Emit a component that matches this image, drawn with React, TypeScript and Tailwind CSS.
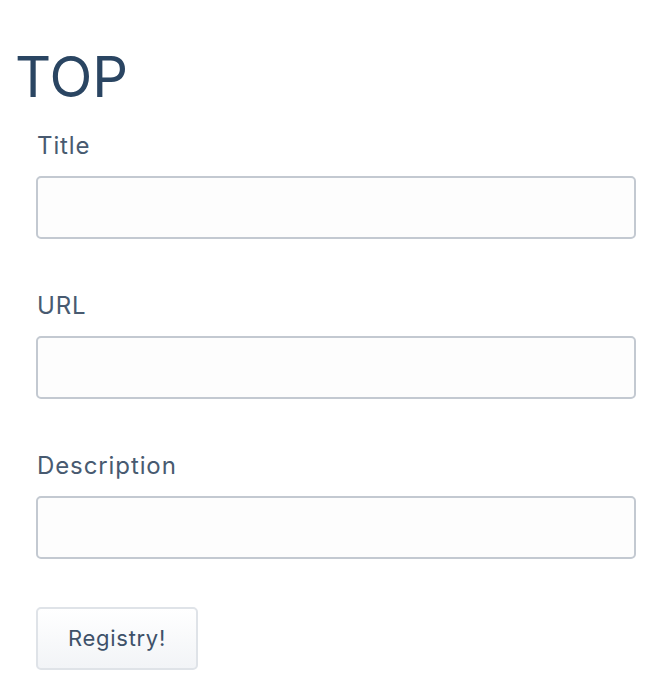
export default function App() {
  const fields = ["Title", "URL", "Description"];
  return (
    <div className="min-h-[690px] bg-white" style={{ fontFamily: "Inter, 'Noto Sans', sans-serif" }}>
      <h1 className="pl-[15px] pt-[43px] text-[56px] leading-[68px] font-normal text-[#2a4562]">TOP</h1>
      <form className="pl-[36px] pt-[21px] w-[636px]">
        {fields.map((f) => (
          <div key={f} className="mb-[53px] flex flex-col">
            <label className="text-[24px] leading-[28px] tracking-[0.9px] text-[#485a70] ml-px">{f}</label>
            <input className="mt-[16px] h-[63px] w-[600px] rounded-[5px] border-2 border-[#c3c9d1] bg-[#fdfdfd] outline-none" />
          </div>
        ))}
        <button
          type="button"
          className="-mt-[5px] h-[63px] w-[162px] rounded-[5px] border-2 border-[#dfe3e8] bg-gradient-to-b from-white to-[#f2f4f7] text-[22px] tracking-[0.7px] text-[#3e5169]"
        >
          Registry!
        </button>
      </form>
    </div>
  );
}
